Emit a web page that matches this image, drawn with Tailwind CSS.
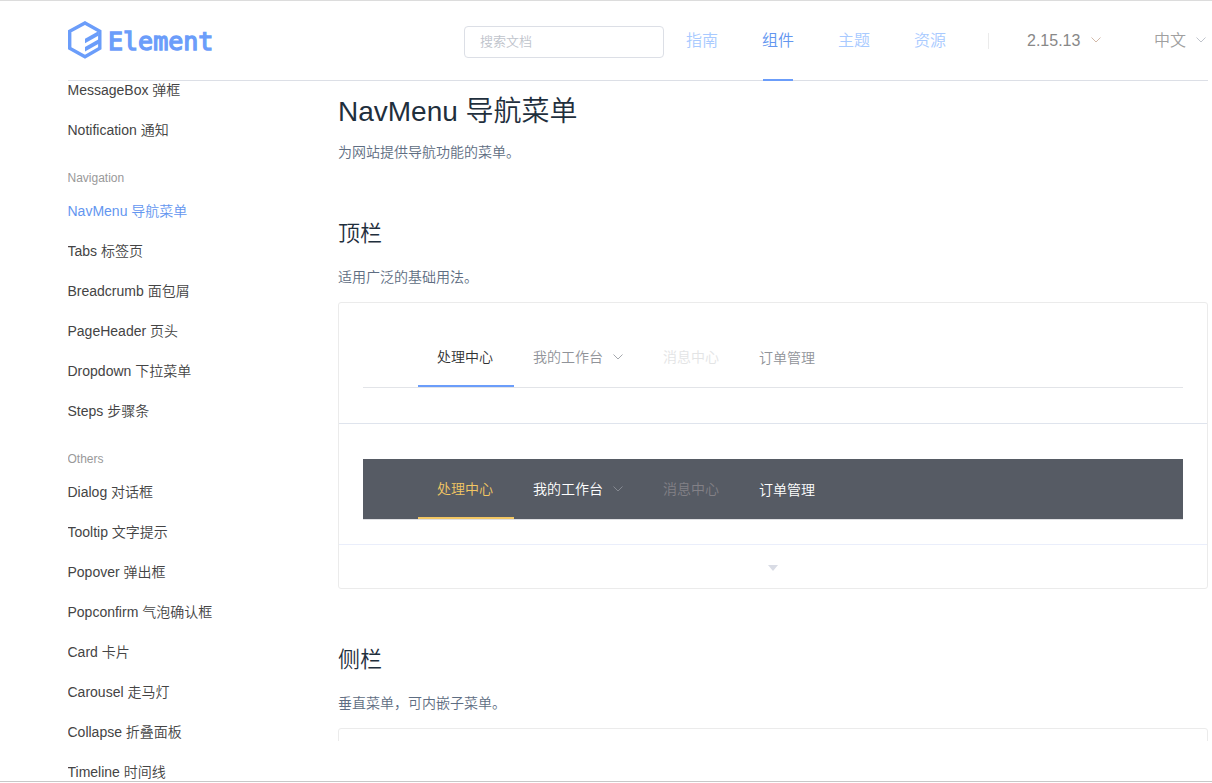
<!DOCTYPE html>
<html lang="zh-CN">
<head>
<meta charset="utf-8">
<title>Element</title>
<script src="https://cdn.jsdelivr.net/npm/@tailwindcss/browser@4"></script>
</head>
<body class="h-[783px] overflow-hidden bg-white font-['Liberation_Sans','Noto_Sans_CJK_SC',sans-serif] font-[350]">
<div class="flex h-[782px] flex-col overflow-hidden border-y border-t-[#dcdcdc] border-b-[#c8c8c8] pl-[68px] pr-1">
  <header class="flex h-20 shrink-0 items-center border-b border-[#dcdfe6]">
    <div class="flex h-10 w-[396px] items-center gap-[6px]">
      <svg class="-mt-px h-[38px] w-[34px]" viewBox="0 0 34 38" fill="none">
        <path d="M17 1.900L31.800 10.300V27.200L17 35.800L1.700 27.200V10.300Z" stroke="#6b9dfa" stroke-width="3.400"/>
        <path d="M17 17.800L30.300 10.300V14.800L17 22.300Z" fill="#6b9dfa"/>
        <path d="M17 25.900L32 17.400V22L17 30.500Z" fill="#6b9dfa"/>
      </svg>
      <span class="mt-px font-['DejaVu_Sans_Mono'] text-[25px] leading-none font-normal text-[#6b9dfa] [-webkit-text-stroke:1.3px_#6b9dfa]">Element</span>
    </div>
    <div class="mt-[3px] flex h-8 w-[200px] items-center rounded border border-[#dcdfe6] pl-[15px] text-[13px] text-[#c0c4cc]">搜索文档</div>
    <nav class="ml-[22px] flex h-20 text-base leading-[79px] text-[#a8caff]">
      <a class="w-[76px]">指南</a>
      <a class="relative w-[76px] text-[#6396f0]">组件<span class="absolute bottom-0 left-px h-0.5 w-[30px] bg-[#6b9dfa]"></span></a>
      <a class="w-[76px]">主题</a>
      <a class="w-[74px]">资源</a>
    </nav>
    <div class="h-4 w-px bg-[#ebebeb]"></div>
    <div class="ml-[38px] flex w-[127px] items-center text-base text-[#888]">2.15.13<svg class="-mt-[2px] ml-[11px] h-[6px] w-[10px]" viewBox="0 0 10 6" fill="none" stroke="#d2b9a8"><path d="M.5.5L5 5L9.500.5"/></svg></div>
    <div class="flex shrink-0 items-center text-base text-[#a0a0a0]">中文<svg class="-mt-[2px] ml-[10px] h-[6px] w-[10px]" viewBox="0 0 10 6" fill="none" stroke="#c0c4cc"><path d="M.5.5L5 5L9.500.5"/></svg></div>
  </header>
  <div class="flex min-h-0 flex-1 overflow-hidden">
    <aside class="-ml-[0.5px] -mt-[11px] w-[270.5px] shrink-0 text-sm leading-10 text-[#444]">
      <p class="h-10">MessageBox 弹框</p>
      <p class="h-10">Notification 通知</p>
      <p class="mt-[15px] h-[26px] text-xs leading-[26px] text-[#999]">Navigation</p>
      <p class="h-10 text-[#6396f0]">NavMenu 导航菜单</p>
      <p class="h-10">Tabs 标签页</p>
      <p class="h-10">Breadcrumb 面包屑</p>
      <p class="h-10">PageHeader 页头</p>
      <p class="h-10">Dropdown 下拉菜单</p>
      <p class="h-10">Steps 步骤条</p>
      <p class="mt-[15px] h-[26px] text-xs leading-[26px] text-[#999]">Others</p>
      <p class="h-10">Dialog 对话框</p>
      <p class="h-10">Tooltip 文字提示</p>
      <p class="h-10">Popover 弹出框</p>
      <p class="h-10">Popconfirm 气泡确认框</p>
      <p class="h-10">Card 卡片</p>
      <p class="h-10">Carousel 走马灯</p>
      <p class="h-10">Collapse 折叠面板</p>
      <p class="h-10">Timeline 时间线</p>
    </aside>
    <main class="h-[660px] flex-1 overflow-hidden">
      <h1 class="mt-[11px] h-10 text-[28px] leading-10 text-[#1f2f3d]">NavMenu 导航菜单</h1>
      <p class="mt-[10px] h-5 text-sm leading-5 text-[#5e6d82]">为网站提供导航功能的菜单。</p>
      <h2 class="mt-[55px] h-[34px] text-[22px] leading-[34px] text-[#1f2f3d]">顶栏</h2>
      <p class="mt-[16px] h-5 text-sm leading-5 text-[#5e6d82]">适用广泛的基础用法。</p>
      <section class="mt-[15px] h-[287px] rounded-[3px] border border-[#ebebeb]">
        <div class="h-[121px] border-b border-[#dfe4ed] px-6 pt-6">
          <div class="flex h-[61px] border-b border-[#e2e4e8] pl-[55px] text-sm leading-[60px] text-[#909399]">
            <div class="h-[60px] w-24 border-b-2 border-[#6b9dfa] pl-[19px] text-[#303133]">处理中心</div>
            <div class="flex w-[130px] items-center pl-[19px]">我的工作台<svg class="ml-[10px] h-[6px] w-[10px]" viewBox="0 0 10 6" fill="none" stroke="#a5a8ad"><path d="M.5.5L5 5L9.500.5"/></svg></div>
            <div class="w-24 pl-[19px] text-[#e3e4e5]">消息中心</div>
            <div class="w-24 pl-[19px] pt-px">订单管理</div>
          </div>
        </div>
        <div class="h-[121px] border-b border-[#eaeefb] px-6 pt-[35px]">
          <div class="flex h-[61px] border-b border-[#dfe0e3] bg-[#565b64] bg-clip-padding pl-[55px] text-sm leading-[60px] text-white">
            <div class="h-[60px] w-24 border-b-2 border-[#f3c763] pl-[19px] text-[#f3c763]">处理中心</div>
            <div class="flex w-[130px] items-center pl-[19px]">我的工作台<svg class="ml-[10px] h-[6px] w-[10px]" viewBox="0 0 10 6" fill="none" stroke="#858991"><path d="M.5.5L5 5L9.500.5"/></svg></div>
            <div class="w-24 pl-[19px] text-[#838187]">消息中心</div>
            <div class="w-24 pl-[19px] pt-px">订单管理</div>
          </div>
        </div>
        <div class="flex h-[43px] items-center justify-center"><svg class="mt-[2px] h-[6px] w-[10px]" viewBox="0 0 10 6"><path d="M0 0H10L5 6Z" fill="#d9dce5"/></svg></div>
      </section>
      <h2 class="mt-[54px] h-[34px] text-[22px] leading-[34px] text-[#1f2f3d]">侧栏</h2>
      <p class="mt-[16px] h-5 text-sm leading-5 text-[#5e6d82]">垂直菜单，可内嵌子菜单。</p>
      <section class="mt-[15px] h-[100px] rounded-[3px] border border-[#ebebeb]"></section>
    </main>
  </div>
</div>
</body>
</html>
